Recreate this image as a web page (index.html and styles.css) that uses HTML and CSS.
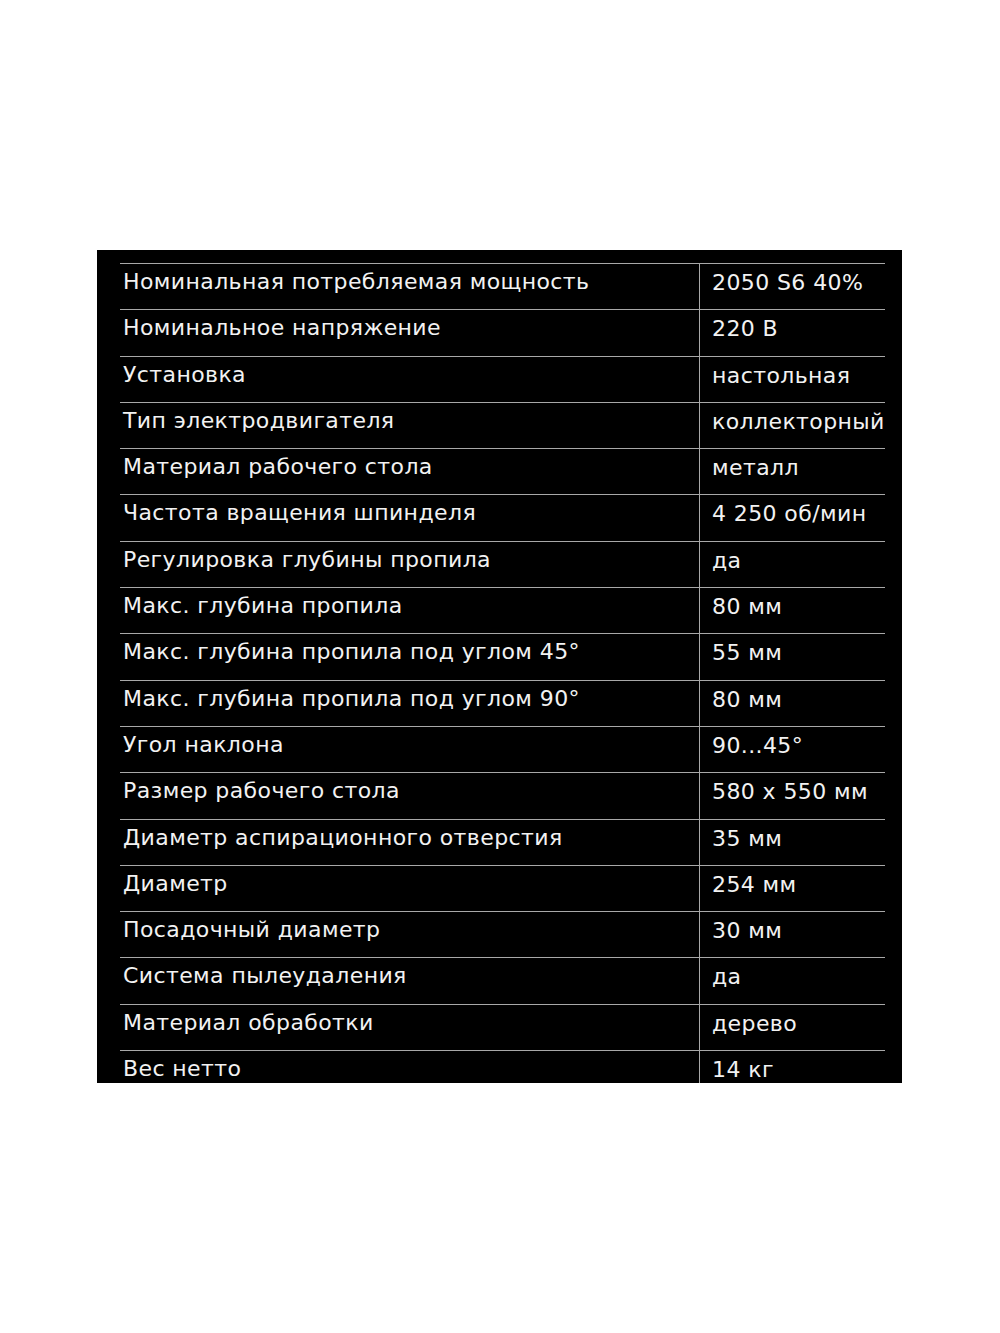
FILE: index.html
```html
<!DOCTYPE html>
<html lang="ru">
<head>
<meta charset="utf-8">
<link rel="stylesheet" href="styles.css">
</head>
<body>
<div class="sheet">
  <div class="specs">
    <div class="row"><div class="label">Номинальная потребляемая мощность</div><div class="value">2050 S6 40%</div></div>
    <div class="row"><div class="label">Номинальное напряжение</div><div class="value">220 В</div></div>
    <div class="row"><div class="label">Установка</div><div class="value">настольная</div></div>
    <div class="row"><div class="label">Тип электродвигателя</div><div class="value">коллекторный</div></div>
    <div class="row"><div class="label">Материал рабочего стола</div><div class="value">металл</div></div>
    <div class="row"><div class="label">Частота вращения шпинделя</div><div class="value">4 250 об/мин</div></div>
    <div class="row"><div class="label">Регулировка глубины пропила</div><div class="value">да</div></div>
    <div class="row"><div class="label">Макс. глубина пропила</div><div class="value">80 мм</div></div>
    <div class="row"><div class="label">Макс. глубина пропила под углом 45°</div><div class="value">55 мм</div></div>
    <div class="row"><div class="label">Макс. глубина пропила под углом 90°</div><div class="value">80 мм</div></div>
    <div class="row"><div class="label">Угол наклона</div><div class="value">90...45°</div></div>
    <div class="row"><div class="label">Размер рабочего стола</div><div class="value">580 x 550 мм</div></div>
    <div class="row"><div class="label">Диаметр аспирационного отверстия</div><div class="value">35 мм</div></div>
    <div class="row"><div class="label">Диаметр</div><div class="value">254 мм</div></div>
    <div class="row"><div class="label">Посадочный диаметр</div><div class="value">30 мм</div></div>
    <div class="row"><div class="label">Система пылеудаления</div><div class="value">да</div></div>
    <div class="row"><div class="label">Материал обработки</div><div class="value">дерево</div></div>
    <div class="row row-last"><div class="label">Вес нетто</div><div class="value">14 кг</div></div>
  </div>
</div>
</body>
</html>
```
FILE: styles.css
```css
html, body {
  margin: 0;
  padding: 0;
  background: #ffffff;
}
body {
  width: 1000px;
  height: 1333px;
  padding-top: 250px;
  box-sizing: border-box;
}
.sheet {
  margin-left: 97px;
  width: 805px;
  height: 833px;
  background: #000000;
  overflow: hidden;
  box-sizing: border-box;
  padding: 13px 17px 0 23px;
  font-family: "DejaVu Sans", sans-serif;
  color: #f2f2f2;
}
.specs {
  display: flex;
  flex-direction: column;
}
.row {
  display: grid;
  grid-template-columns: 579px 1fr;
  height: 46.3px;
  border-top: 1px solid #a8a8a8;
  box-sizing: border-box;
}
.row-last {
  height: 33px;
}
.label, .value {
  font-size: 22px;
  letter-spacing: 0.4px;
  line-height: 24px;
  padding-top: 6px;
  white-space: nowrap;
}
.label {
  padding-left: 3px;
}
.value {
  padding-left: 12px;
  border-left: 1px solid #a8a8a8;
  padding-top: 7px;
}
```
